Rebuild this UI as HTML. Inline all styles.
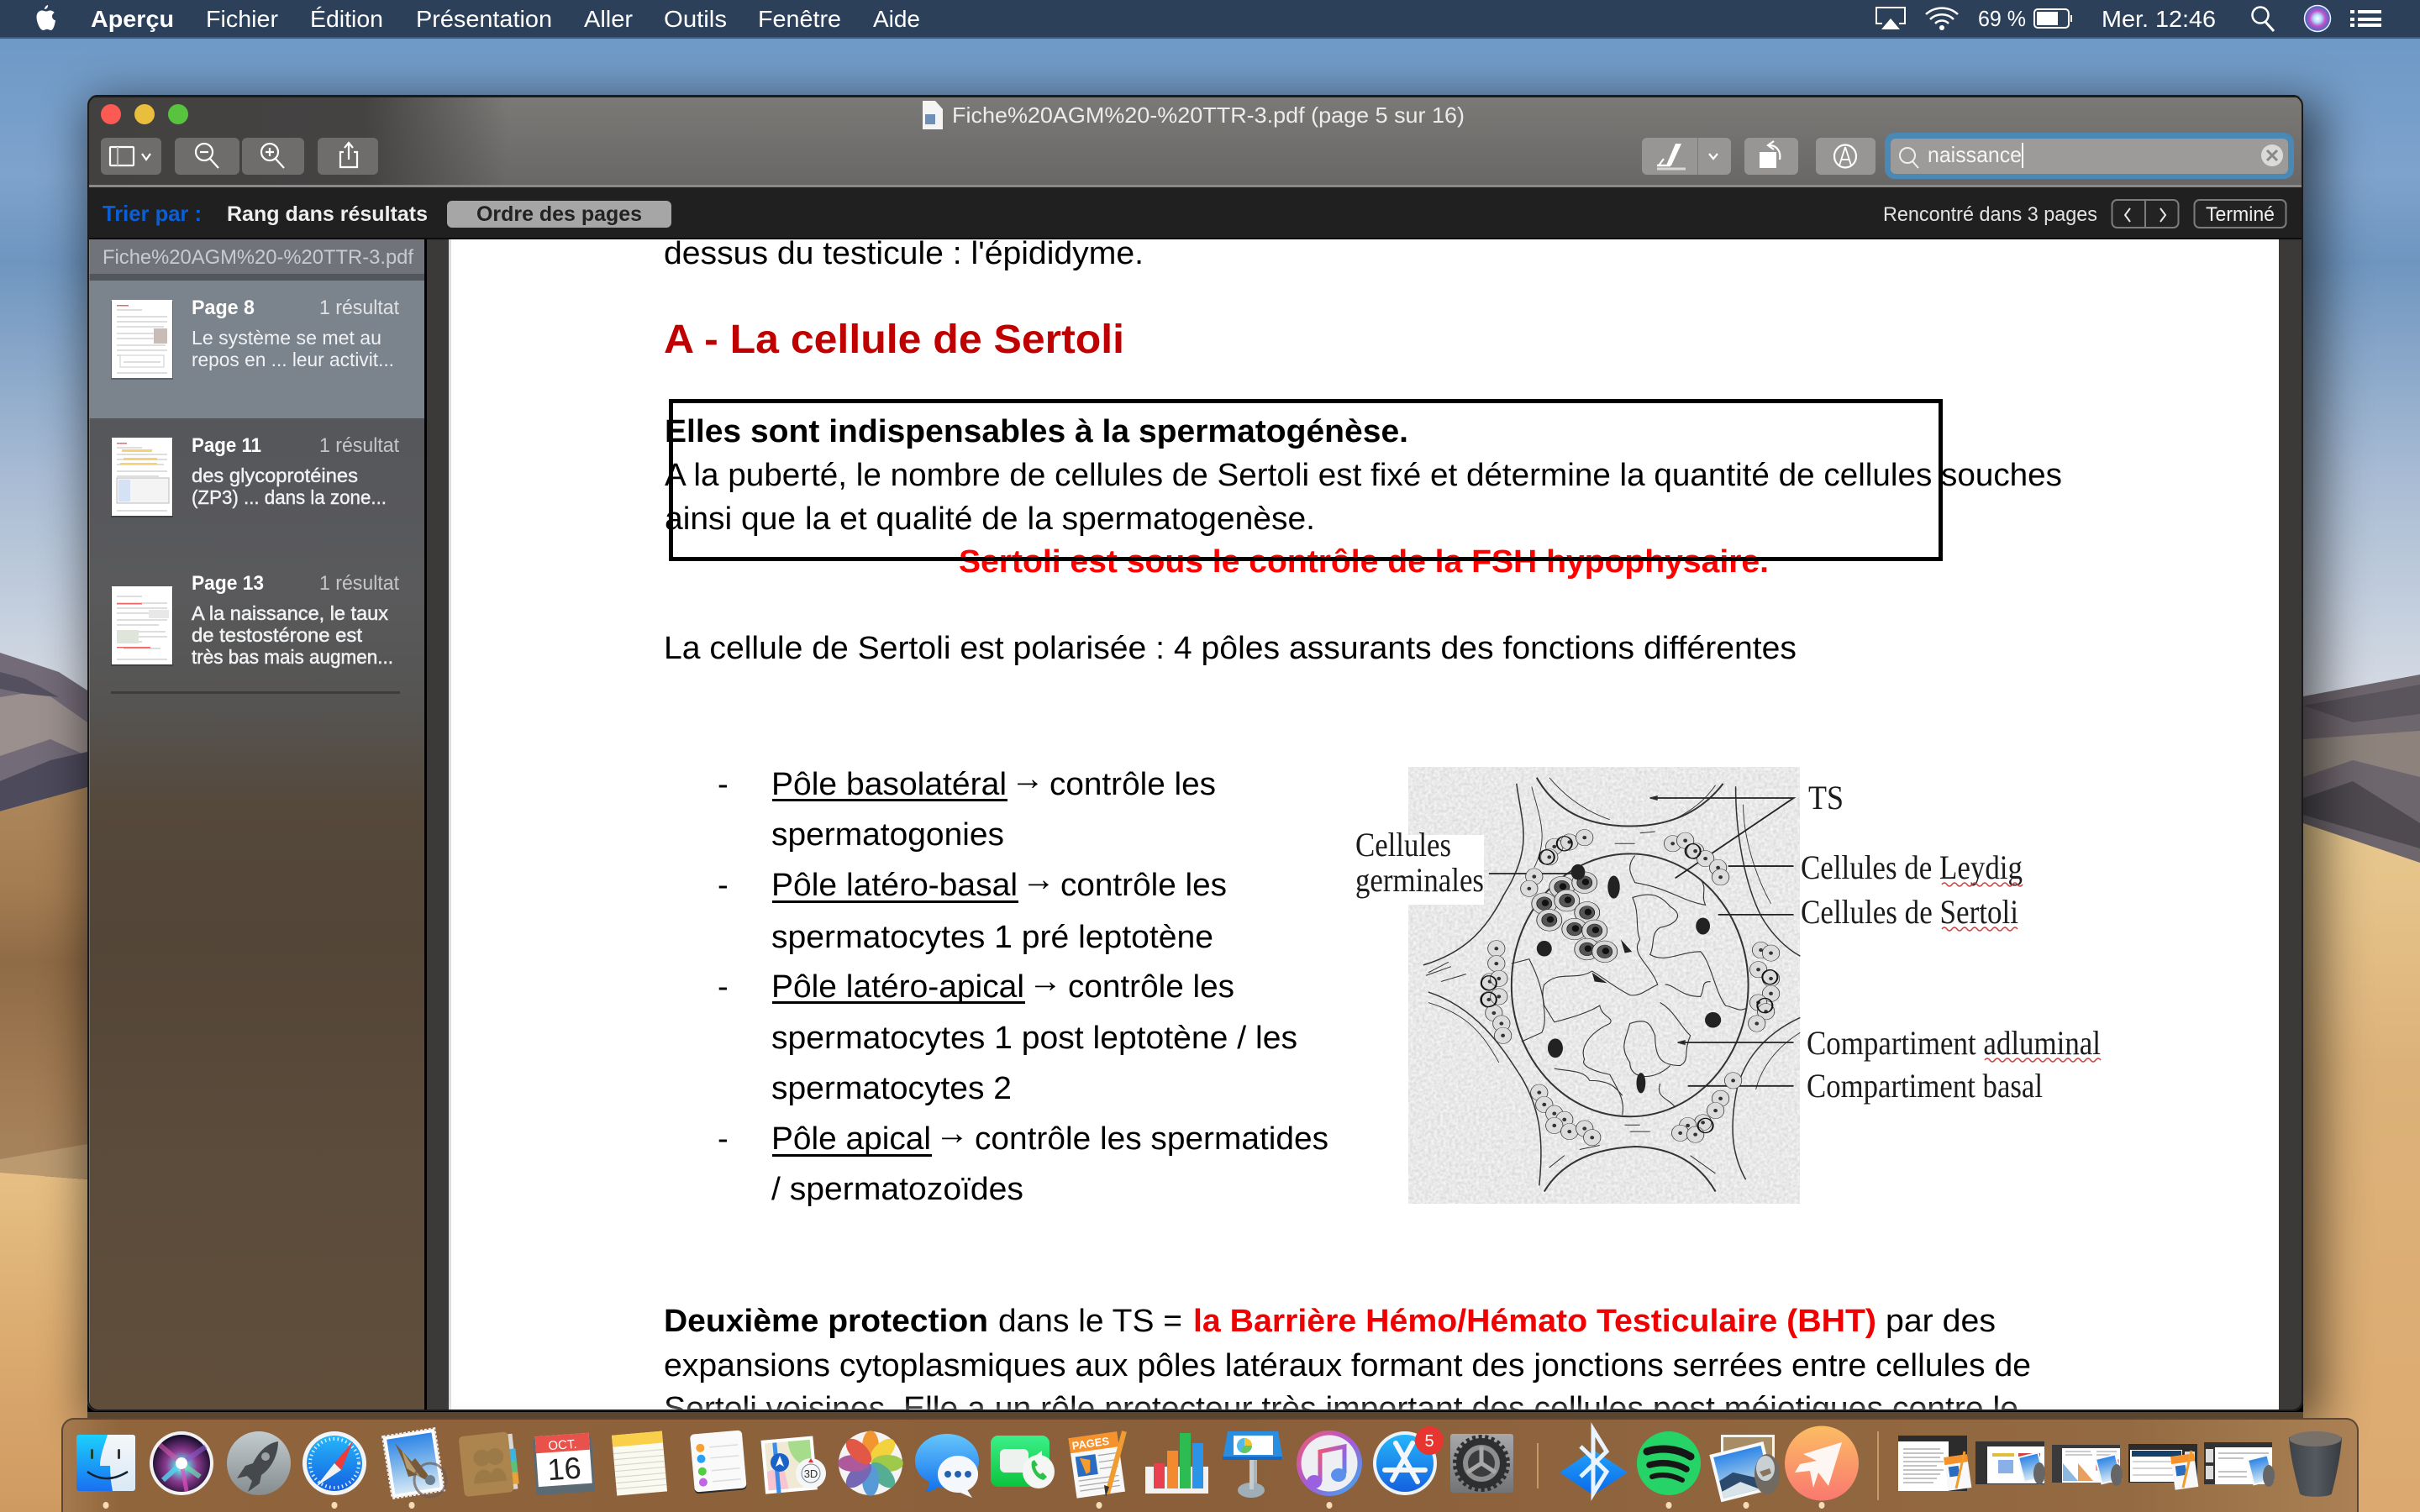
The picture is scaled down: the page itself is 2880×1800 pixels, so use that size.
<!DOCTYPE html>
<html lang="fr"><head><meta charset="utf-8"><title>Aperçu</title>
<style>
html,body{margin:0;padding:0;background:#000;width:2880px;height:1800px;overflow:hidden}
svg{display:block}
text{font-family:"Liberation Sans",Arial,sans-serif}
.d{font-family:"Liberation Sans",Arial,sans-serif;font-size:38px;fill:#000}
.db{font-family:"Liberation Sans",Arial,sans-serif;font-size:38px;fill:#000;font-weight:bold}
.ar{font-family:"Liberation Sans",Arial,sans-serif;font-size:40px;fill:#000}
.f{font-family:"Liberation Serif","Times New Roman",serif;font-size:40px;fill:#1c1c1c}
.m{font-size:28px;fill:#fff}
.sb{font-size:23px;fill:#f0f2f4}
.sh{font-size:24px;fill:#fff;font-weight:bold}
.sr{font-size:24px;fill:#c4c6c8}
.dg *{vector-effect:non-scaling-stroke}
</style></head><body>
<svg xmlns="http://www.w3.org/2000/svg" width="2880" height="1800" viewBox="0 0 2880 1800">
<defs>
<linearGradient id="sky" x1="0" y1="0" x2="0" y2="1"><stop offset="0" stop-color="#6a96c4"/><stop offset=".2" stop-color="#7ea3cd"/><stop offset=".3" stop-color="#6f96c0"/><stop offset=".55" stop-color="#a9bcd4"/><stop offset=".8" stop-color="#d6dbe4"/><stop offset="1" stop-color="#e4e5ea"/></linearGradient>
<linearGradient id="dL" x1="0" y1="0" x2="0" y2="1"><stop offset="0" stop-color="#ad875c"/><stop offset=".25" stop-color="#a57d52"/><stop offset=".45" stop-color="#8f6b46"/><stop offset=".8" stop-color="#a27c54"/><stop offset="1" stop-color="#a8855e"/></linearGradient>
<linearGradient id="dL2" x1="0" y1="0" x2="0" y2="1"><stop offset="0" stop-color="#e6bf84"/><stop offset=".5" stop-color="#dbab70"/><stop offset="1" stop-color="#cf9a62"/></linearGradient>
<linearGradient id="dR" x1="0" y1="0" x2="0" y2="1"><stop offset="0" stop-color="#e8c98f"/><stop offset=".35" stop-color="#dcb27a"/><stop offset="1" stop-color="#dcaa70"/></linearGradient>
<linearGradient id="tb" x1="0" y1="0" x2="0" y2="1"><stop offset="0" stop-color="#7b7976"/><stop offset="1" stop-color="#686766"/></linearGradient>
<linearGradient id="tbL" x1="0" y1="0" x2="1" y2="0"><stop offset="0" stop-color="#434140"/><stop offset=".66" stop-color="#454342"/><stop offset="1" stop-color="#454342" stop-opacity="0"/></linearGradient>
<linearGradient id="side" x1="0" y1="0" x2="0" y2="1"><stop offset="0" stop-color="#50535a"/><stop offset=".3" stop-color="#5a5a5c"/><stop offset=".4" stop-color="#555452"/><stop offset=".48" stop-color="#55493c"/><stop offset=".6" stop-color="#534537"/><stop offset=".8" stop-color="#5c4c3b"/><stop offset="1" stop-color="#604e3b"/></linearGradient>
<linearGradient id="pgb" x1="0" y1="0" x2="0" y2="1"><stop offset="0" stop-color="#fff" stop-opacity="0"/><stop offset="1" stop-color="#e8e8e8" stop-opacity=".45"/></linearGradient>
<linearGradient id="dock" x1="0" y1="0" x2="1" y2="0"><stop offset="0" stop-color="#a67a4e"/><stop offset=".025" stop-color="#90653c"/><stop offset=".5" stop-color="#8a5f3a"/><stop offset=".9" stop-color="#946a42"/><stop offset="1" stop-color="#aa8054"/></linearGradient>
<linearGradient id="fb" x1="0" y1="0" x2="0" y2="1"><stop offset="0" stop-color="#1bd0fd"/><stop offset="1" stop-color="#1a70f0"/></linearGradient>
<linearGradient id="fw" x1="0" y1="0" x2="0" y2="1"><stop offset="0" stop-color="#f5f7f9"/><stop offset="1" stop-color="#d9e9f6"/></linearGradient>
<linearGradient id="gr" x1="0" y1="0" x2="0" y2="1"><stop offset="0" stop-color="#c2cbce"/><stop offset="1" stop-color="#868d90"/></linearGradient>
<linearGradient id="sf" x1="0" y1="0" x2="0" y2="1"><stop offset="0" stop-color="#25b6fa"/><stop offset="1" stop-color="#1560e0"/></linearGradient>
<linearGradient id="msg" x1="0" y1="0" x2="0" y2="1"><stop offset="0" stop-color="#66c6fb"/><stop offset="1" stop-color="#1272ee"/></linearGradient>
<linearGradient id="ft" x1="0" y1="0" x2="0" y2="1"><stop offset="0" stop-color="#3bf08a"/><stop offset="1" stop-color="#0cc43c"/></linearGradient>
<linearGradient id="mus" x1="0" y1="0" x2="1" y2="1"><stop offset="0" stop-color="#f85a6e"/><stop offset=".5" stop-color="#a65ad8"/><stop offset="1" stop-color="#2cb4f4"/></linearGradient>
<linearGradient id="mn" x1="0" y1="0" x2="1" y2="1"><stop offset="0" stop-color="#f4566c"/><stop offset=".6" stop-color="#9a60e0"/><stop offset="1" stop-color="#3a9cf0"/></linearGradient>
<linearGradient id="pl" x1="0" y1="0" x2="0" y2="1"><stop offset="0" stop-color="#fbbd63"/><stop offset="1" stop-color="#fa7870"/></linearGradient>
<linearGradient id="tr" x1="0" y1="0" x2="1" y2="0"><stop offset="0" stop-color="#3d4248"/><stop offset=".5" stop-color="#545a60"/><stop offset="1" stop-color="#373b40"/></linearGradient>
<linearGradient id="bt" x1="0" y1="0" x2="0" y2="1"><stop offset="0" stop-color="#22a2f8"/><stop offset="1" stop-color="#0a68ea"/></linearGradient>
<linearGradient id="sp" x1="0" y1="0" x2="0" y2="1"><stop offset="0" stop-color="#a8a8aa"/><stop offset="1" stop-color="#737476"/></linearGradient>
<linearGradient id="ph" x1="0" y1="0" x2="0" y2="1"><stop offset="0" stop-color="#2f86e8"/><stop offset=".5" stop-color="#7fb6ea"/><stop offset="1" stop-color="#d5e8f6"/></linearGradient>
<radialGradient id="si" cx=".5" cy=".55" r=".55"><stop offset="0" stop-color="#e8f2ff"/><stop offset=".22" stop-color="#6ab8d4"/><stop offset=".5" stop-color="#8c3a90"/><stop offset="1" stop-color="#120c28"/></radialGradient>
<radialGradient id="siS" cx=".5" cy=".5" r=".5"><stop offset="0" stop-color="#fff"/><stop offset=".3" stop-color="#b0e0ff"/><stop offset=".6" stop-color="#c050c8"/><stop offset="1" stop-color="#3070c0"/></radialGradient>
<filter id="sh" x="-10%" y="-10%" width="120%" height="120%"><feGaussianBlur stdDeviation="28"/></filter>
<filter id="nz" x="0" y="0" width="100%" height="100%"><feTurbulence type="fractalNoise" baseFrequency=".28" numOctaves="2" seed="4"/><feColorMatrix values=".36 0 0 0 .63  .36 0 0 0 .63  .36 0 0 0 .63  0 0 0 0 1"/></filter>
<clipPath id="win"><rect x="104" y="113" width="2637" height="1567" rx="12"/></clipPath>
<clipPath id="pg"><rect x="534" y="285" width="2178" height="1394"/></clipPath>
<g id="c"><ellipse rx="17" ry="27" fill="#dcdcdc" stroke="#333" stroke-width="1.300"/><ellipse rx="4" ry="6" fill="#333"/></g>
<g id="s"><ellipse rx="25" ry="36" fill="#d8d8d8" stroke="#2a2a2a" stroke-width="1.400"/><ellipse rx="15" ry="22" fill="#555" stroke="#111" stroke-width="1.200"/><ellipse cx="2" cy="-2" rx="7" ry="11" fill="#111"/></g>
<g id="cd"><ellipse rx="15" ry="24" fill="none" stroke="#111" stroke-width="3.400"/></g>
<g id="t1" stroke="#bdbdbd" stroke-width="1"><path d="M6 12h30M6 20h60M6 26h60M6 32h56M6 40h60M6 46h50M6 54h58M6 60h60M6 66h30M14 74h44M6 87h60"/></g>
</defs>

<!-- wallpaper -->
<rect width="2880" height="1040" fill="url(#sky)"/>
<path d="M0 777 40 790 70 800 104 822 V950 H0Z" fill="#736b78"/>
<path d="M0 830 50 822 104 860 V900 L60 880 0 900Z" fill="#a89c96" opacity=".75"/>
<path d="M0 800 30 808 70 830 30 826 0 820Z" fill="#55505f"/>
<path d="M0 930 60 905 104 895 104 937 0 966Z" fill="#4d4a5c"/>
<path d="M2741 829 2880 803 V1040 H2741Z" fill="#6e666d"/>
<path d="M2741 880 2880 870 V925 L2800 905 2741 925Z" fill="#93887f" opacity=".85"/>
<path d="M2741 840 2880 815 V850 L2800 860Z" fill="#5a545c"/>
<path d="M2741 950 2800 930 2880 980 V1010 L2741 970Z" fill="#4e4a50"/>
<path d="M0 966 104 937 V1400 H0Z" fill="url(#dL)"/>
<path d="M0 1380 104 1362 V1404 L0 1396Z" fill="#bb9a70"/>
<path d="M0 1396 104 1404 V1800 H0Z" fill="url(#dL2)"/>
<path d="M2741 980 2880 1027 V1800 H2741Z" fill="url(#dR)"/>

<!-- window shadow -->
<rect x="104" y="120" width="2660" height="1580" rx="12" fill="#000" opacity=".55" filter="url(#sh)"/>

<!-- menubar -->
<rect width="2880" height="44" fill="#2c405a"/><rect y="44" width="2880" height="2" fill="#3f5a7d"/>
<path d="M57 6c-2 .4-4 2.700-4 5 2.600.100 4.400-2.700 4-5zM65 24c-1.800-1-3-2.500-3-4.600 0-1.900 1.100-3.400 2.700-4.400-1.200-1.700-3.100-2.500-5-2.500-1.900 0-3 1-4.700 1-1.800 0-3.300-1-5-1-3.700 0-6.500 3.200-6.500 7.800 0 5.400 3.700 15.700 8 15.700 1.600 0 2.700-1.200 4.500-1.200 1.800 0 2.700 1.200 4.400 1.200 2.400 0 4.600-4.500 5.600-11.900z" fill="#fff"/>
<text x="108" y="32" class="m" font-weight="bold" textLength="99" lengthAdjust="spacingAndGlyphs">Aperçu</text>
<text x="245" y="32" class="m" textLength="86" lengthAdjust="spacingAndGlyphs">Fichier</text>
<text x="369" y="32" class="m" textLength="87" lengthAdjust="spacingAndGlyphs">Édition</text>
<text x="495" y="32" class="m" textLength="162" lengthAdjust="spacingAndGlyphs">Présentation</text>
<text x="695" y="32" class="m" textLength="58" lengthAdjust="spacingAndGlyphs">Aller</text>
<text x="790" y="32" class="m" textLength="75" lengthAdjust="spacingAndGlyphs">Outils</text>
<text x="902" y="32" class="m" textLength="99" lengthAdjust="spacingAndGlyphs">Fenêtre</text>
<text x="1039" y="32" class="m" textLength="56" lengthAdjust="spacingAndGlyphs">Aide</text>
<path d="M2240 28h-7V9h34v19h-7" fill="none" stroke="#fff" stroke-width="2"/><path d="M2250 22l11 13h-22z" fill="#fff"/>
<g fill="none" stroke="#fff" stroke-width="2.500"><path d="M2292 17a28 28 0 0 1 38 0"/><path d="M2297 23a20 20 0 0 1 28 0"/><path d="M2303 28a11 11 0 0 1 16 0"/></g><circle cx="2311" cy="33" r="3" fill="#fff"/>
<text x="2354" y="31" font-size="26" fill="#fff" textLength="57" lengthAdjust="spacingAndGlyphs">69 %</text>
<rect x="2421" y="11" width="41" height="22" rx="4" fill="none" stroke="#fff" stroke-width="2"/><rect x="2424" y="14" width="25" height="16" fill="#fff"/><rect x="2464" y="18" width="2" height="8" fill="#fff"/>
<text x="2501" y="32" class="m" textLength="136" lengthAdjust="spacingAndGlyphs">Mer. 12:46</text>
<circle cx="2690" cy="18" r="9.500" fill="none" stroke="#fff" stroke-width="2.500"/><path d="M2696 26l10 11" stroke="#fff" stroke-width="3"/>
<circle cx="2758" cy="22" r="15.500" fill="url(#siS)" stroke="#eef" stroke-width="1.500"/>
<g fill="#fff"><rect x="2797" y="12" width="5" height="4"/><rect x="2806" y="12" width="28" height="4"/><rect x="2797" y="21" width="5" height="4"/><rect x="2806" y="21" width="28" height="4"/><rect x="2797" y="28" width="5" height="4"/><rect x="2806" y="28" width="28" height="4"/></g>

<!-- window -->
<g clip-path="url(#win)">
<rect x="104" y="113" width="2637" height="1567" fill="#3b3a39"/>
<rect x="104" y="113" width="2637" height="3" fill="#1c1c1c"/>
<rect x="104" y="116" width="2637" height="107" fill="url(#tb)"/>
<rect x="104" y="116" width="500" height="107" fill="url(#tbL)"/>
<rect x="104" y="220" width="2637" height="3" fill="#8a8987"/>
<rect x="104" y="223" width="2637" height="62" fill="#202020"/>
<rect x="104" y="283" width="2637" height="2" fill="#0c0c0c"/>
<!-- sidebar -->
<rect x="104" y="285" width="401" height="1395" fill="url(#side)"/>
<rect x="104" y="285" width="401" height="41" fill="#70747a"/>
<rect x="104" y="326" width="401" height="8" fill="#53565c"/>
<rect x="104" y="334" width="401" height="164" fill="#7b838d"/>
<rect x="505" y="285" width="3" height="1395" fill="#000"/>
<rect x="104" y="285" width="3" height="1395" fill="#8a8884" opacity=".7"/>
<rect x="132" y="823" width="344" height="3" fill="#3d3d3d"/>
<text x="122" y="314" font-size="24" fill="#c8cbce" textLength="370" lengthAdjust="spacingAndGlyphs">Fiche%20AGM%20-%20TTR-3.pdf</text>
<!-- rows -->
<text x="228" y="374" class="sh" textLength="75" lengthAdjust="spacingAndGlyphs">Page 8</text>
<text x="380" y="374" class="sr" style="fill:#e0e2e4" textLength="95" lengthAdjust="spacingAndGlyphs">1 résultat</text>
<text x="228" y="410" class="sb" textLength="226" lengthAdjust="spacingAndGlyphs">Le système se met au</text>
<text x="228" y="436" class="sb" textLength="241" lengthAdjust="spacingAndGlyphs">repos en ... leur activit...</text>
<text x="228" y="538" class="sh" textLength="83" lengthAdjust="spacingAndGlyphs">Page 11</text>
<text x="380" y="538" class="sr" textLength="95" lengthAdjust="spacingAndGlyphs">1 résultat</text>
<text x="228" y="574" class="sb" style="stroke:#f0f2f4;stroke-width:.4" textLength="198" lengthAdjust="spacingAndGlyphs">des glycoprotéines</text>
<text x="228" y="600" class="sb" style="stroke:#f0f2f4;stroke-width:.4" textLength="232" lengthAdjust="spacingAndGlyphs">(ZP3) ... dans la zone...</text>
<text x="228" y="702" class="sh" textLength="86" lengthAdjust="spacingAndGlyphs">Page 13</text>
<text x="380" y="702" class="sr" textLength="95" lengthAdjust="spacingAndGlyphs">1 résultat</text>
<text x="228" y="738" class="sb" style="stroke:#f0f2f4;stroke-width:.5" textLength="234" lengthAdjust="spacingAndGlyphs">A la naissance, le taux</text>
<text x="228" y="764" class="sb" style="stroke:#f0f2f4;stroke-width:.5" textLength="203" lengthAdjust="spacingAndGlyphs">de testostérone est</text>
<text x="228" y="790" class="sb" style="stroke:#f0f2f4;stroke-width:.5" textLength="240" lengthAdjust="spacingAndGlyphs">très bas mais augmen...</text>
<!-- thumbs -->
<g transform="translate(133 357)"><rect x="-1" y="2" width="74" height="93" fill="#000" opacity=".25"/><rect width="72" height="93" fill="#fff"/><use href="#t1"/><rect x="50" y="34" width="16" height="18" fill="#c9bcb6"/><rect x="6" y="6" width="14" height="1.500" fill="#e66"/><rect x="10" y="66" width="52" height="14" fill="none" stroke="#ccc"/></g>
<g transform="translate(133 521)"><rect x="-1" y="2" width="74" height="93" fill="#000" opacity=".25"/><rect width="72" height="93" fill="#fff"/><use href="#t1"/><rect x="12" y="14" width="36" height="3" fill="#f5d27a"/><rect x="14" y="24" width="40" height="3" fill="#f5d27a"/><rect x="10" y="30" width="44" height="2" fill="#f5d27a"/><rect x="6" y="48" width="62" height="30" fill="#f4f4f4" stroke="#bbb"/><rect x="8" y="50" width="14" height="26" fill="#d5e2f6"/><rect x="6" y="6" width="12" height="1.500" fill="#e66"/></g>
<g transform="translate(133 698)"><rect x="-1" y="2" width="74" height="93" fill="#000" opacity=".25"/><rect width="72" height="93" fill="#fff"/><use href="#t1"/><rect x="6" y="20" width="30" height="1.500" fill="#e66"/><rect x="6" y="72" width="40" height="1.500" fill="#e66"/><rect x="6" y="52" width="26" height="16" fill="#dfe5db"/><rect x="44" y="28" width="24" height="10" fill="#e8e8e8"/></g>
<!-- page -->
<rect x="534" y="285" width="2178" height="1395" fill="#fff"/>
<rect x="534" y="285" width="3" height="1395" fill="#dcdcdc"/>
<g clip-path="url(#pg)">
<text x="790" y="314" class="d" textLength="571" lengthAdjust="spacingAndGlyphs">dessus du testicule : l'épididyme.</text>
<text x="790" y="420" font-size="48" font-weight="bold" fill="#c00000" textLength="548" lengthAdjust="spacingAndGlyphs">A - La cellule de Sertoli</text>
<text x="791" y="526" class="db" textLength="885" lengthAdjust="spacingAndGlyphs">Elles sont indispensables à la spermatogénèse.</text>
<text x="791" y="578" class="d" textLength="1663" lengthAdjust="spacingAndGlyphs">A la puberté, le nombre de cellules de Sertoli est fixé et détermine la quantité de cellules souches</text>
<text x="791" y="630" class="d" textLength="774" lengthAdjust="spacingAndGlyphs">ainsi que la et qualité de la spermatogenèse.</text>
<text x="1141" y="681" class="db" style="fill:#f00" textLength="964" lengthAdjust="spacingAndGlyphs">Sertoli est sous le contrôle de la FSH hypophysaire.</text>
<rect x="798.500" y="477.500" width="1511" height="188" fill="none" stroke="#000" stroke-width="5"/>
<text x="790" y="784" class="d" textLength="1348" lengthAdjust="spacingAndGlyphs">La cellule de Sertoli est polarisée : 4 pôles assurants des fonctions différentes</text>

<g>
<text x="854" y="946" class="d">-</text><text x="854" y="1066" class="d">-</text><text x="854" y="1187" class="d">-</text><text x="854" y="1368" class="d">-</text>
<text x="918" y="946" class="d" textLength="280" lengthAdjust="spacingAndGlyphs">Pôle basolatéral</text><rect x="919" y="951" width="280" height="3"/>
<text x="1203" y="940" class="ar">→</text>
<text x="1249" y="946" class="d" textLength="198" lengthAdjust="spacingAndGlyphs">contrôle les</text>
<text x="918" y="1006" class="d" textLength="277" lengthAdjust="spacingAndGlyphs">spermatogonies</text>
<text x="918" y="1066" class="d" textLength="293" lengthAdjust="spacingAndGlyphs">Pôle latéro-basal</text><rect x="919" y="1072" width="293" height="3"/>
<text x="1216" y="1060" class="ar">→</text>
<text x="1262" y="1066" class="d" textLength="198" lengthAdjust="spacingAndGlyphs">contrôle les</text>
<text x="918" y="1128" class="d" textLength="526" lengthAdjust="spacingAndGlyphs">spermatocytes 1 pré leptotène</text>
<text x="918" y="1187" class="d" textLength="301" lengthAdjust="spacingAndGlyphs">Pôle latéro-apical</text><rect x="919" y="1192" width="301" height="3"/>
<text x="1224" y="1181" class="ar">→</text>
<text x="1271" y="1187" class="d" textLength="198" lengthAdjust="spacingAndGlyphs">contrôle les</text>
<text x="918" y="1248" class="d" textLength="626" lengthAdjust="spacingAndGlyphs">spermatocytes 1 post leptotène / les</text>
<text x="918" y="1308" class="d" textLength="286" lengthAdjust="spacingAndGlyphs">spermatocytes 2</text>
<text x="918" y="1368" class="d" textLength="190" lengthAdjust="spacingAndGlyphs">Pôle apical</text><rect x="919" y="1374" width="190" height="3"/>
<text x="1113" y="1362" class="ar">→</text>
<text x="1160" y="1368" class="d" textLength="421" lengthAdjust="spacingAndGlyphs">contrôle les spermatides</text>
<text x="918" y="1428" class="d" textLength="300" lengthAdjust="spacingAndGlyphs">/ spermatozoïdes</text>
</g>

<!-- diagram -->
<rect x="1676" y="913" width="466" height="520" filter="url(#nz)"/>
<rect x="1676" y="994" width="90" height="83" fill="#fff"/>
<g class="dg" transform="translate(1580 890) scale(.5995 .3571)" fill="none" stroke="#333" stroke-width="1.400">
<path d="M415 100Q470 262 600 262Q720 262 785 120" stroke-width="2"/>
<path d="M440 100Q490 200 560 240M770 125Q740 200 680 245" stroke-width=".9"/>
<path d="M375 120C385 250 410 330 350 490C320 590 280 680 190 725" stroke-width="1.500"/>
<path d="M405 130C420 230 440 300 410 400" stroke-width=".9"/>
<path d="M810 130C810 300 830 460 860 560C880 620 910 670 938 695" stroke-width="1.500"/>
<path d="M825 190C825 300 850 430 880 520" stroke-width=".9"/>
<path d="M200 815C300 870 350 1010 385 1100C420 1200 430 1300 420 1460" stroke-width="1.500"/>
<path d="M200 850C280 890 310 960 340 1050" stroke-width=".9"/>
<path d="M430 1480Q480 1340 610 1330Q720 1335 770 1480" stroke-width="2"/>
<path d="M938 900C860 960 820 1060 810 1160C800 1260 800 1350 830 1440" stroke-width="1.500"/>
<path d="M938 950C890 1000 860 1070 850 1140" stroke-width=".9"/>
<path d="M195 760L245 730M225 780L275 755M200 750L240 715M570 320h40M620 285l30 -5M590 1258h30M600 1280h40M500 1340l40 -14M440 1400L470 1360M720 1360L770 1420" stroke-width="1"/>
<ellipse cx="600" cy="792" rx="235" ry="438" stroke-width="2"/>
<path d="M610 360C590 400 605 430 610 450C680 470 700 510 750 525C740 490 755 470 740 440" stroke-width="1.100"/>
<path d="M605 500C640 480 660 490 680 530C710 560 690 590 660 600C640 620 650 660 640 690C670 720 700 680 740 680C760 710 770 820 790 860C815 870 815 880 830 870" stroke-width="1.100"/>
<path d="M605 500C620 550 610 600 620 640C600 690 640 720 655 790C630 810 620 830 600 825C570 800 550 770 525 745C490 780 460 740 430 790C420 830 440 900 425 950L385 980" stroke-width="1.100"/>
<path d="M365 720L400 705C420 770 425 810 430 860L450 915C510 890 530 870 540 860C545 900 570 900 560 920C520 950 500 1000 510 1040C500 1060 530 1080 560 1090C580 1150 590 1180 585 1225" stroke-width="1.100"/>
<path d="M660 850C690 880 700 930 720 960C705 1020 720 1040 700 1060C660 1060 650 1030 650 960C640 920 635 900 600 920C590 980 580 1000 600 1050C600 1110 650 1110 680 1060" stroke-width="1.100"/>
<path d="M450 1070C480 1080 510 1075 520 1110C560 1110 570 1130 585 1160M660 1120C650 1170 680 1170 690 1200M670 790C690 790 700 830 740 830C750 800 740 780 760 780" stroke-width="1.100"/>
<path d="M640 168H925L690 435M320 420H490M795 395H925M775 557H925M695 983H925M715 1128H925" stroke="#222" stroke-width="1.800"/>
<path d="M640 168l14 -6v12zM695 983l14 -6v12z" fill="#222"/>
<g stroke="none"><use href="#c" x="450" y="330"/><use href="#c" x="480" y="315"/><use href="#c" x="510" y="300"/><use href="#c" x="440" y="365"/><use href="#c" x="410" y="430"/><use href="#c" x="400" y="470"/><use href="#c" x="685" y="320"/><use href="#c" x="710" y="310"/><use href="#c" x="730" y="345"/><use href="#c" x="750" y="370"/><use href="#c" x="775" y="400"/><use href="#c" x="780" y="432"/>
<use href="#s" x="465" y="465"/><use href="#s" x="430" y="520"/><use href="#s" x="475" y="510"/><use href="#s" x="440" y="575"/><use href="#s" x="515" y="550"/><use href="#s" x="490" y="605"/><use href="#s" x="530" y="610"/><use href="#s" x="515" y="672"/><use href="#s" x="550" y="680"/><use href="#s" x="510" y="450"/>
<use href="#c" x="860" y="675"/><use href="#c" x="880" y="685"/><use href="#c" x="855" y="740"/><use href="#c" x="880" y="770"/><use href="#c" x="880" y="820"/><use href="#c" x="855" y="850"/><use href="#c" x="870" y="880"/><use href="#c" x="852" y="920"/><use href="#c" x="335" y="670"/><use href="#c" x="335" y="720"/><use href="#c" x="322" y="780"/><use href="#c" x="340" y="770"/><use href="#c" x="320" y="840"/><use href="#c" x="340" y="830"/><use href="#c" x="330" y="885"/><use href="#c" x="345" y="920"/><use href="#c" x="348" y="960"/><use href="#c" x="420" y="1150"/><use href="#c" x="430" y="1190"/><use href="#c" x="450" y="1220"/><use href="#c" x="470" y="1240"/><use href="#c" x="450" y="1260"/><use href="#c" x="480" y="1280"/><use href="#c" x="510" y="1270"/><use href="#c" x="525" y="1300"/><use href="#c" x="805" y="1110"/><use href="#c" x="780" y="1170"/><use href="#c" x="770" y="1210"/><use href="#c" x="745" y="1250"/><use href="#c" x="715" y="1260"/><use href="#c" x="700" y="1285"/><use href="#c" x="730" y="1290"/><use href="#cd" x="470" y="320"/><use href="#cd" x="435" y="365"/><use href="#cd" x="725" y="345"/><use href="#cd" x="878" y="765"/><use href="#cd" x="868" y="860"/><use href="#cd" x="320" y="785"/><use href="#cd" x="320" y="840"/><use href="#cd" x="750" y="1260"/></g>
<g fill="#222" stroke="none"><ellipse cx="497" cy="415" rx="14" ry="26"/><ellipse cx="568" cy="465" rx="12" ry="38"/><ellipse cx="745" cy="595" rx="14" ry="28"/><ellipse cx="430" cy="670" rx="15" ry="26"/><ellipse cx="765" cy="908" rx="16" ry="26"/><ellipse cx="452" cy="1002" rx="15" ry="32"/><ellipse cx="622" cy="1118" rx="9" ry="34"/><path d="M582 640L604 680L590 685ZM525 750L555 785L530 780Z"/></g>
</g>
<text x="2152" y="963" class="f" textLength="42" lengthAdjust="spacingAndGlyphs">TS</text>
<text x="1613" y="1019" class="f" textLength="114" lengthAdjust="spacingAndGlyphs">Cellules</text>
<text x="1613" y="1061" class="f" textLength="153" lengthAdjust="spacingAndGlyphs">germinales</text>
<text x="2143" y="1046" class="f" textLength="264" lengthAdjust="spacingAndGlyphs">Cellules de Leydig</text>
<text x="2143" y="1099" class="f" textLength="259" lengthAdjust="spacingAndGlyphs">Cellules de Sertoli</text>
<text x="2150" y="1255" class="f" textLength="350" lengthAdjust="spacingAndGlyphs">Compartiment adluminal</text>
<text x="2150" y="1306" class="f" textLength="281" lengthAdjust="spacingAndGlyphs">Compartiment basal</text>
<g fill="none" stroke="#c44" stroke-width="1.500"><path d="M2311 1053q3 -4 6 0t6 0t6 0t6 0t6 0t6 0t6 0t6 0t6 0t6 0t6 0t6 0t6 0t6 0t6 0t6 0"/><path d="M2311 1106q3 -4 6 0t6 0t6 0t6 0t6 0t6 0t6 0t6 0t6 0t6 0t6 0t6 0t6 0t6 0t6 0"/><path d="M2362 1262q3 -4 6 0t6 0t6 0t6 0t6 0t6 0t6 0t6 0t6 0t6 0t6 0t6 0t6 0t6 0t6 0t6 0t6 0t6 0t6 0t6 0t6 0t6 0t6 0"/></g>

<text x="790" y="1585" class="db" textLength="386" lengthAdjust="spacingAndGlyphs">Deuxième protection</text>
<text x="1188" y="1585" class="d" textLength="219" lengthAdjust="spacingAndGlyphs">dans le TS =</text>
<text x="1420" y="1585" class="db" style="fill:#f00000" textLength="813" lengthAdjust="spacingAndGlyphs">la Barrière Hémo/Hémato Testiculaire (BHT)</text>
<text x="2244" y="1585" class="d" textLength="131" lengthAdjust="spacingAndGlyphs">par des</text>
<text x="790" y="1638" class="d" textLength="1627" lengthAdjust="spacingAndGlyphs">expansions cytoplasmiques aux pôles latéraux formant des jonctions serrées entre cellules de</text>
<text x="790" y="1689" class="d" textLength="1612" lengthAdjust="spacingAndGlyphs">Sertoli voisines. Elle a un rôle protecteur très important des cellules post méiotiques contre le</text>
<rect x="534" y="1668" width="2178" height="12" fill="url(#pgb)"/>
</g>
</g>
<rect x="105" y="114" width="2635" height="1565" rx="12" fill="none" stroke="#1a1a1a" stroke-width="2"/>

<!-- traffic lights -->
<circle cx="132" cy="136" r="12" fill="#fc5a52"/><circle cx="172" cy="136" r="12" fill="#e8be3c"/><circle cx="212" cy="136" r="12" fill="#58c33e"/>
<!-- title -->
<path d="M1098 120h15l9 10v24h-24z" fill="#f4f4f4"/><rect x="1101" y="136" width="12" height="12" fill="#6f8fb8"/>
<text x="1133" y="146" font-size="26" fill="#ececec" textLength="610" lengthAdjust="spacingAndGlyphs">Fiche%20AGM%20-%20TTR-3.pdf (page 5 sur 16)</text>
<!-- left toolbar -->
<g fill="#6e6d6b"><rect x="120" y="164" width="72" height="44" rx="6"/><rect x="208" y="164" width="77" height="44" rx="6"/><rect x="288" y="164" width="74" height="44" rx="6"/><rect x="378" y="164" width="72" height="44" rx="6"/></g>
<g fill="none" stroke="#fff" stroke-width="2.200">
<rect x="131" y="175" width="28" height="22" rx="1"/><path d="M140 175v22" stroke="#bbb"/><path d="M169 183l5 7 5-7"/>
<circle cx="243" cy="181" r="10"/><path d="M250 189l10 11"/><path d="M238 181h10"/>
<circle cx="321" cy="181" r="10"/><path d="M328 189l10 11"/><path d="M316 181h10M321 176v10"/>
<path d="M409 181h-4v18h20v-18h-4"/><path d="M415 190V171M410 176l5-6 5 6"/>
</g>
<!-- right toolbar -->
<g fill="#979694"><rect x="1954" y="164" width="106" height="44" rx="6"/><rect x="2076" y="164" width="64" height="44" rx="6"/><rect x="2161" y="164" width="71" height="44" rx="6"/></g>
<rect x="2020" y="164" width="1" height="44" fill="#7b7a78"/>
<path d="M1994 171h7l-12 26h-6z" fill="#fff"/><path d="M1972 197h16" stroke="#fff" stroke-width="2.500"/><path d="M1972 201h34" stroke="#d8d8d8" stroke-width="3"/><path d="M1974 197l6-8" stroke="#fff" stroke-width="2"/>
<path d="M2034 183l5 6 5-6" fill="none" stroke="#fff" stroke-width="2.200"/>
<rect x="2094" y="181" width="20" height="19" fill="#fff"/><path d="M2118 190c2-10-4-17-12-17M2111 168l-7 5 7 5" fill="none" stroke="#fff" stroke-width="2.200"/>
<ellipse cx="2196" cy="186" rx="13" ry="13.500" fill="none" stroke="#fff" stroke-width="2.200"/><path d="M2196 175l-7 22M2196 175l7 22M2191 190h10" fill="none" stroke="#fff" stroke-width="1.800"/>
<!-- search -->
<rect x="2243" y="158" width="487" height="55" rx="12" fill="#4a88b5"/>
<rect x="2250" y="165" width="473" height="42" rx="6" fill="#9c9b99"/>
<circle cx="2270" cy="185" r="9" fill="none" stroke="#eee" stroke-width="2"/><path d="M2276 192l7 8" stroke="#eee" stroke-width="2"/>
<text x="2294" y="193" font-size="26" fill="#f4f4f4" textLength="112" lengthAdjust="spacingAndGlyphs">naissance</text>
<rect x="2406" y="170" width="2" height="30" fill="#fff"/>
<circle cx="2704" cy="185" r="13" fill="#dadad8"/><path d="M2698 179l12 12M2710 179l-12 12" stroke="#888" stroke-width="3"/>
<!-- find bar -->
<text x="122" y="263" font-size="26" font-weight="bold" fill="#0a5fd6" textLength="118" lengthAdjust="spacingAndGlyphs">Trier par :</text>
<text x="270" y="263" font-size="25" font-weight="bold" fill="#eee" textLength="239" lengthAdjust="spacingAndGlyphs">Rang dans résultats</text>
<rect x="532" y="239" width="267" height="32" rx="6" fill="#a6a6a6"/>
<text x="567" y="263" font-size="25" font-weight="bold" fill="#222" textLength="197" lengthAdjust="spacingAndGlyphs">Ordre des pages</text>
<text x="2241" y="263" font-size="24" fill="#e2e2e2" textLength="255" lengthAdjust="spacingAndGlyphs">Rencontré dans 3 pages</text>
<rect x="2513.500" y="238" width="79" height="33" rx="6" fill="#232323" stroke="#7c7c7c" stroke-width="2"/>
<path d="M2553 238v33" stroke="#7c7c7c" stroke-width="2"/>
<path d="M2535 248l-6 8 6 8M2571 248l6 8-6 8" fill="none" stroke="#e8e8e8" stroke-width="2"/>
<rect x="2611.500" y="238" width="109" height="33" rx="6" fill="#232323" stroke="#7c7c7c" stroke-width="2"/>
<text x="2625" y="263" font-size="24" fill="#f0f0f0" textLength="82" lengthAdjust="spacingAndGlyphs">Terminé</text>

<!-- gap under window -->
<rect x="104" y="1681" width="2637" height="9" fill="#5a4630"/>
<!-- dock -->
<rect x="74" y="1689" width="2732" height="130" rx="14" fill="url(#dock)" stroke="#5b4733" stroke-width="2"/>
<g>
<!-- finder -->
<rect x="91" y="1708" width="70" height="67" rx="3" fill="url(#fb)"/>
<path d="M128 1708h30a3 3 0 0 1 3 3v61a3 3 0 0 1-3 3h-24c-2-10-3-20-3-30h-12c0-12 5-24 9-37z" fill="url(#fw)"/>
<rect x="108" y="1725" width="3" height="12" rx="1.500" fill="#143"/><rect x="140" y="1725" width="3" height="12" rx="1.500" fill="#333"/>
<path d="M104 1752q22 16 48 0" fill="none" stroke="#123" stroke-width="2.500"/>
<!-- siri -->
<circle cx="216" cy="1742" r="38" fill="#f2f2f2"/><circle cx="216" cy="1742" r="34" fill="url(#si)"/>
<path d="M216 1742L190 1720" stroke="#d05aa8" stroke-width="6" opacity=".6"/><path d="M216 1742L245 1722" stroke="#8a5ad0" stroke-width="6" opacity=".6"/><path d="M216 1742L238 1758" stroke="#6ce0b0" stroke-width="6" opacity=".7"/><path d="M216 1742L194 1762" stroke="#50d8f0" stroke-width="6" opacity=".8"/><path d="M216 1742L222 1775" stroke="#e050c0" stroke-width="5" opacity=".7"/><circle cx="216" cy="1742" r="7" fill="#fff"/>
<!-- rocket -->
<circle cx="308" cy="1742" r="38" fill="url(#gr)"/>
<path d="M331 1716c-14 2-24 14-30 26l-9 3-10 15 12-3 6 6-5 13 14-10 2-10c12-8 20-24 20-40z" fill="#46494c"/><circle cx="316" cy="1734" r="5" fill="#9ba2a5"/>
<!-- safari -->
<circle cx="398" cy="1742" r="38" fill="#f2f4f6"/><circle cx="398" cy="1742" r="33" fill="url(#sf)"/>
<circle cx="398" cy="1742" r="29" fill="none" stroke="#d8eefc" stroke-width="4" stroke-dasharray="1.500 3.500"/>
<path d="M398 1742l22-26-14 34z" fill="#f03a36"/><path d="M398 1742l-22 28 30-20z" fill="#f2f2f2"/>
<!-- mail -->
<g transform="rotate(-9 493 1742)"><rect x="461" y="1705" width="62" height="74" fill="#fff" stroke="#eee" stroke-width="3" stroke-dasharray="3 2"/><rect x="465" y="1709" width="54" height="66" fill="url(#ph)"/></g>
<path d="M470 1718l20 22 4-4 14 18 6 12-18-10-10 2-6-18z" fill="#7a5a36"/><path d="M478 1726l12 18 10 14-16-10z" fill="#b49a70"/>
<ellipse cx="512" cy="1762" rx="19" ry="20" fill="none" stroke="#6c5d56" stroke-width="3" opacity=".7"/><circle cx="512" cy="1762" r="6" fill="#6c7f90"/>
<!-- contacts -->
<g transform="rotate(-6 580 1742)"><rect x="604" y="1710" width="9" height="66" fill="#d8d8d8"/><rect x="606" y="1728" width="9" height="14" fill="#3ab4e0"/><rect x="606" y="1742" width="9" height="14" fill="#5ac07a"/><rect x="606" y="1756" width="9" height="14" fill="#e8a23a"/><rect x="549" y="1707" width="59" height="72" rx="5" fill="#ab854d"/><circle cx="574" cy="1735" r="10" fill="#9c7a48"/><circle cx="590" cy="1735" r="10" fill="#9c7a48"/><path d="M562 1765c0-10 6-16 12-16s12 6 12 16zM580 1765c0-10 6-16 11-16s10 6 10 16z" fill="#9c7a48"/></g>
<!-- calendar -->
<g transform="rotate(-4 670 1742)"><rect x="636" y="1712" width="70" height="66" fill="#5c6a74"/><rect x="639" y="1708" width="64" height="60" fill="#fff"/><rect x="639" y="1708" width="64" height="20" fill="#e8524a"/><text x="671" y="1725" font-size="15" fill="#fff" text-anchor="middle">OCT.</text><text x="671" y="1761" font-size="36" fill="#222" text-anchor="middle">16</text></g>
<!-- notes -->
<g transform="rotate(-5 762 1742)"><rect x="731" y="1706" width="60" height="72" fill="#fbfaf0"/><rect x="731" y="1706" width="60" height="14" fill="#fad04a"/><path d="M731 1728h60M731 1735h60M731 1742h60M731 1749h60M731 1756h60M731 1763h60M731 1770h60" stroke="#d8d8d0" stroke-width="1.200"/></g>
<!-- reminders -->
<g transform="rotate(-5 855 1742)"><rect x="824" y="1706" width="62" height="70" rx="5" fill="#2a2a2a"/><rect x="824" y="1705" width="62" height="69" rx="5" fill="#fafafa"/><circle cx="835" cy="1722" r="5" fill="#f8a030"/><circle cx="835" cy="1735" r="5" fill="#2ca0f0"/><circle cx="835" cy="1750" r="5" fill="#50d040"/><circle cx="835" cy="1763" r="5" fill="#c066e0"/><path d="M846 1722h34M846 1735h34M846 1750h34M846 1763h34" stroke="#ddd" stroke-width="1.500"/></g>
<!-- maps -->
<g transform="rotate(-5 940 1742)"><rect x="908" y="1712" width="62" height="64" fill="#fff"/><rect x="912" y="1716" width="54" height="56" fill="#f0ead4"/><path d="M940 1716c0 20 12 30 26 34v-34z" fill="#a6dc8c"/><path d="M912 1750l20-6 4 28h-24z" fill="#f7c4d0"/><path d="M924 1716v60" stroke="#3c8ce8" stroke-width="5"/></g>
<circle cx="928" cy="1741" r="11" fill="#1a62c8"/><path d="M928 1733l5 13-5-3-5 3z" fill="#fff"/>
<circle cx="965" cy="1754" r="18" fill="#f4f6f8"/><circle cx="965" cy="1754" r="11" fill="none" stroke="#7a8894"/><text x="965" y="1759" font-size="13" fill="#333" text-anchor="middle">3D</text><path d="M965 1736l3 5h-6z" fill="#d33"/>
<!-- photos -->
<circle cx="1036" cy="1742" r="38" fill="#f4f4f4"/>
<g opacity=".92"><ellipse cx="1036" cy="1722" rx="10" ry="19" fill="#f28f22"/><ellipse cx="1050" cy="1728" rx="10" ry="19" fill="#f3d02e" transform="rotate(45 1050 1728)"/><ellipse cx="1056" cy="1742" rx="19" ry="10" fill="#98c63c"/><ellipse cx="1050" cy="1756" rx="10" ry="19" fill="#48a88c" transform="rotate(-45 1050 1756)"/><ellipse cx="1036" cy="1762" rx="10" ry="19" fill="#4a94d4"/><ellipse cx="1022" cy="1756" rx="10" ry="19" fill="#6c5cb0" transform="rotate(45 1022 1756)"/><ellipse cx="1016" cy="1742" rx="19" ry="10" fill="#a84c94"/><ellipse cx="1022" cy="1728" rx="10" ry="19" fill="#e24a38" transform="rotate(-45 1022 1728)"/></g>
<!-- messages -->
<path d="M1127 1707c21 0 38 14 38 32s-17 32-38 32c-4 0-8 0-11 -1-4 4-10 6-15 6 3-3 5-7 5-12-12-6-17-15-17-25 0-18 17-32 38-32z" fill="url(#msg)"/>
<ellipse cx="1140" cy="1755" rx="24" ry="22" fill="#f4f7fb"/><path d="M1150 1772l7 11-14-6z" fill="#f4f7fb"/>
<circle cx="1128" cy="1755" r="4" fill="#2462b0"/><circle cx="1140" cy="1755" r="4" fill="#2462b0"/><circle cx="1152" cy="1755" r="4" fill="#2462b0"/>
<!-- facetime -->
<rect x="1179" y="1709" width="70" height="61" rx="9" fill="url(#ft)"/>
<rect x="1190" y="1725" width="34" height="28" rx="6" fill="#eef2ee"/><path d="M1227 1737l13-10v22z" fill="#eef2ee"/>
<ellipse cx="1236" cy="1752" rx="19" ry="20" fill="#f4f6f4"/><path d="M1228 1740c-2 8 4 20 14 22l4-4-5-5-3 2c-3-2-5-5-6-9l3-2-4-6z" fill="#2bc24a"/>
<!-- pages -->
<g transform="rotate(-8 1305 1742)"><rect x="1276" y="1708" width="58" height="72" fill="#f8f8f8"/><rect x="1276" y="1708" width="58" height="18" fill="#f6922b"/><text x="1279" y="1722" font-size="13" fill="#fff" font-weight="bold">PAGES</text><rect x="1281" y="1731" width="24" height="24" fill="#2a6cc0"/><path d="M1286 1733l12 4-2 14-5 2z" fill="#f59c30"/><path d="M1308 1733h22M1308 1741h22M1308 1749h22M1281 1760h48M1281 1766h48M1281 1772h48" stroke="#aaa" stroke-width="1.300"/></g>
<path d="M1338 1704l-20 74" stroke="#f09c30" stroke-width="6"/><path d="M1320 1770l-4 12 -2-14z" fill="#333"/>
<!-- numbers -->
<rect x="1363" y="1746" width="75" height="32" fill="#f2f2f2"/>
<rect x="1373" y="1742" width="13" height="30" fill="#e8404e"/><rect x="1389" y="1727" width="13" height="45" fill="#f48a30"/><rect x="1404" y="1706" width="13" height="66" fill="#2cbc52"/><rect x="1419" y="1718" width="13" height="54" fill="#2c94e8"/>
<!-- keynote -->
<rect x="1492" y="1735" width="4" height="38" fill="#aab4ba"/><ellipse cx="1489" cy="1774" rx="16" ry="9" fill="#a0aeb8"/><rect x="1487" y="1735" width="5" height="38" fill="#c4ccd0"/>
<path d="M1461 1704h60l6 34h-72z" fill="#2a8ee0"/><rect x="1455" y="1734" width="71" height="4" fill="#1768c0"/>
<rect x="1468" y="1709" width="47" height="23" fill="#fff"/><circle cx="1481" cy="1721" r="9" fill="#54b8e8"/><path d="M1481 1721v-9a9 9 0 0 1 9 9z" fill="#f4c430"/><path d="M1481 1721h9a9 9 0 0 1-14 7z" fill="#60c860"/>
<!-- music -->
<circle cx="1582" cy="1742" r="39" fill="url(#mus)"/><circle cx="1582" cy="1742" r="33.500" fill="#edeff2"/>
<path d="M1571 1764v-36l29-6v32" fill="none" stroke="url(#mn)" stroke-width="5"/><ellipse cx="1564" cy="1764" rx="9" ry="8" fill="#9a60e0"/><ellipse cx="1593" cy="1756" rx="9" ry="8" fill="#5a90ec"/>
<!-- appstore -->
<circle cx="1672" cy="1742" r="38" fill="#eef2f5"/><circle cx="1672" cy="1742" r="34" fill="url(#sf)"/>
<path d="M1681 1718l-24 44M1661 1718l26 46M1648 1750h48" stroke="#f4f7fa" stroke-width="6" stroke-linecap="round" fill="none"/>
<ellipse cx="1701" cy="1715" rx="17" ry="17" fill="#e93530"/><text x="1701" y="1722" font-size="20" fill="#fff" text-anchor="middle">5</text>
<!-- sysprefs -->
<rect x="1726" y="1707" width="75" height="70" rx="3" fill="url(#sp)"/>
<circle cx="1763" cy="1742" r="30" fill="#2d2f31"/><circle cx="1763" cy="1742" r="31" fill="none" stroke="#2d2f31" stroke-width="6" stroke-dasharray="4 3.500"/>
<circle cx="1763" cy="1742" r="22" fill="#8e8e8e"/><circle cx="1763" cy="1742" r="16" fill="#3a3c3e"/><path d="M1763 1742v-20M1763 1742l17 11M1763 1742l-17 11" stroke="#a8a8a8" stroke-width="5"/>
<rect x="1829" y="1718" width="2" height="54" fill="#c49a68"/>
<!-- bluetooth -->
<path d="M1896 1726L1937 1753L1896 1780L1856 1753Z" fill="url(#bt)"/>
<path d="M1881 1722L1912 1752L1896 1778V1702L1912 1728L1881 1758" fill="none" stroke="#eaf4ff" stroke-width="5"/>
<!-- spotify -->
<circle cx="1986" cy="1742" r="38" fill="#25d366"/>
<g fill="none" stroke="#161616" stroke-linecap="round"><path d="M1960 1728c17-5 36-4 52 6" stroke-width="9"/><path d="M1963 1744c14-4 30-3 44 5" stroke-width="7.500"/><path d="M1966 1758c12-4 24-2 36 4" stroke-width="6"/></g>
<!-- preview -->
<rect x="2048" y="1708" width="64" height="50" fill="#f4f2ec"/><rect x="2051" y="1711" width="58" height="30" fill="#a88c64"/>
<g transform="rotate(-14 2078 1750)"><rect x="2040" y="1722" width="66" height="58" fill="#f8f8f8"/><rect x="2044" y="1726" width="58" height="50" fill="url(#ph)"/><path d="M2044 1755l18-6 40 20v7h-58z" fill="#2c4a6e"/><path d="M2044 1768l24-6 20 14h-44z" fill="#d8e4ea"/></g>
<ellipse cx="2103" cy="1755" rx="15" ry="24" fill="#706a62"/><ellipse cx="2101" cy="1748" rx="11" ry="15" fill="#c9d0d4"/><path d="M2094 1752l12-4 2 6-10 4z" fill="#8a745e"/>
<!-- plane -->
<ellipse cx="2168" cy="1742" rx="44" ry="44.500" fill="url(#pl)"/>
<path d="M2192 1717l-46 14 16 8-20 4-6 10 18-2 4 20 6-18 12 16z" fill="#fdf6f2"/>
<rect x="2234" y="1704" width="2" height="82" fill="#c49a68"/>
<!-- minimized -->
<rect x="2259" y="1709" width="82" height="66" fill="#2c2c2c"/><rect x="2259" y="1716" width="60" height="59" fill="#fff"/><g stroke="#8a8a8a"><path d="M2265 1725h44M2265 1730h48M2265 1735h44M2265 1740h48M2265 1745h40M2265 1750h48M2265 1755h44M2265 1760h40M2265 1765h36"/></g>
<rect x="2351" y="1716" width="82" height="51" fill="#333"/><rect x="2365" y="1722" width="68" height="44" fill="#fff"/><rect x="2371" y="1730" width="26" height="4" fill="#dcc03c"/><rect x="2402" y="1730" width="26" height="4" fill="#c44"/><rect x="2378" y="1738" width="18" height="16" fill="#8ab0e8"/><rect x="2404" y="1738" width="22" height="8" fill="#90c060"/>
<rect x="2442" y="1720" width="81" height="45" fill="#3a3a3a"/><rect x="2454" y="1724" width="69" height="41" fill="#fff"/><path d="M2455 1742l18 21h-18z" fill="#8cb8e0"/><path d="M2473 1742l18 21h-18z" fill="#e8a060"/><rect x="2495" y="1738" width="26" height="12" fill="#fde0e0" stroke="#e44"/><path d="M2458 1728h30M2458 1732h32M2495 1728h24M2495 1732h24" stroke="#999"/>
<rect x="2533" y="1719" width="82" height="46" fill="#2c2c2c"/><rect x="2535" y="1726" width="62" height="38" fill="#fff"/><rect x="2537" y="1727" width="59" height="7" fill="#14406c"/><path d="M2538 1740h56M2538 1748h56M2538 1756h56" stroke="#aaa"/><rect x="2600" y="1728" width="12" height="10" fill="#ddd"/>
<rect x="2623" y="1717" width="81" height="50" fill="#333"/><rect x="2636" y="1723" width="68" height="44" fill="#fff"/><rect x="2625" y="1725" width="9" height="16" fill="#ddd"/><rect x="2625" y="1745" width="9" height="16" fill="#ddd"/><circle cx="2682" cy="1744" r="6" fill="#3c8c6c"/><circle cx="2696" cy="1744" r="6" fill="#3c74ac"/><path d="M2640 1730h60M2640 1736h30M2640 1752h34M2640 1758h34" stroke="#888"/>
<!-- minis -->
<g id="miniP"><g transform="rotate(-8 2330 1755)"><rect x="2316" y="1733" width="28" height="40" fill="#f8f8f8"/><rect x="2316" y="1733" width="28" height="9" fill="#f6922b"/><rect x="2320" y="1745" width="12" height="12" fill="#2a6cc0"/></g><path d="M2338 1728l-10 44" stroke="#f09c30" stroke-width="3"/></g>
<use href="#miniP" x="270" y="-1"/>
<g id="miniV"><g transform="rotate(-14 2413 1750)"><rect x="2405" y="1732" width="26" height="32" fill="#f8f8f8"/><rect x="2407" y="1734" width="22" height="28" fill="url(#ph)"/></g><ellipse cx="2427" cy="1754" rx="7" ry="13" fill="#666"/></g>
<use href="#miniV" x="92" y="2"/><use href="#miniV" x="273" y="3"/>
<!-- trash -->
<path d="M2724 1712c0-6 62-6 63 0-2 26-8 50-12 66-2 5-36 5-38 0-4-16-11-40-13-66z" fill="url(#tr)"/>
<ellipse cx="2755.500" cy="1713" rx="31" ry="9" fill="#77716a"/>
<!-- dots -->
<g fill="#f8dcb8"><ellipse cx="126" cy="1792" rx="3.500" ry="4"/><ellipse cx="398" cy="1792" rx="3.500" ry="4"/><ellipse cx="490" cy="1792" rx="3.500" ry="4"/><ellipse cx="1308" cy="1792" rx="3.500" ry="4"/><ellipse cx="1582" cy="1792" rx="3.500" ry="4"/><ellipse cx="1986" cy="1792" rx="3.500" ry="4"/><ellipse cx="2078" cy="1792" rx="3.500" ry="4"/><ellipse cx="2168" cy="1792" rx="3.500" ry="4"/></g>
</g>
</svg>
</body></html>
